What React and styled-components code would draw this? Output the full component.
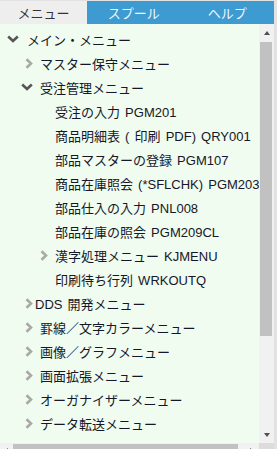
import React from 'react';
import styled, { createGlobalStyle } from 'styled-components';

const Global = createGlobalStyle`
  html, body { margin: 0; padding: 0; overflow: hidden; background: #e2e2e2; }
  body { font-family: "Liberation Sans", "Noto Sans CJK JP", sans-serif; }
`;

const Frame = styled.div`
  width: 274px;
  margin-top: 1px;
  display: flex;
  flex-direction: column;
`;

const TabBar = styled.div`
  display: grid;
  grid-template-columns: 87px 1fr 1fr;
  height: 23px;
  background: #3d9bd1;
`;

const Tab = styled.div`
  display: flex;
  align-items: center;
  justify-content: center;
  font-size: 13px;
  font-family: "Noto Sans CJK JP", sans-serif;
  background: ${(p) => (p.$active ? '#eeeeee' : 'transparent')};
  color: ${(p) => (p.$active ? '#333333' : '#eef6fb')};
`;

const Viewport = styled.div`
  display: grid;
  grid-template-columns: 1fr 15px;
  grid-template-rows: 419px 15px;
  background: #effcef;
`;

const Content = styled.div`
  overflow: hidden;
`;

const Tree = styled.div`
  width: max-content;
  padding: 3px 4px 0 0;
`;

const Row = styled.div`
  display: flex;
  align-items: center;
  height: 24px;
  padding-left: ${(p) => p.$indent}px;
  white-space: nowrap;
  font-size: 13px;
  word-spacing: 1.5px;
  color: #16162a;
`;

const IconBox = styled.span`
  flex: none;
  width: 22px;
  height: 24px;
  display: flex;
  align-items: center;
  justify-content: center;
`;

const Label = styled.span`
  margin-left: ${(p) => (p.$tight ? -5 : 0)}px;
`;

const DownSvg = styled.svg`
  transform: translateX(${(p) => p.$shift}px);
`;

/* scrollbars */
const VBar = styled.div`
  display: flex;
  flex-direction: column;
  background: #f1f1f1;
`;

const HBar = styled.div`
  display: flex;
  background: #f1f1f1;
`;

const Corner = styled.div`
  background: #dcdcdc;
`;

const ArrowButton = styled.div`
  flex: none;
  width: ${(p) => (p.$horizontal ? (p.$narrow ? 12 : 15) : 15)}px;
  height: ${(p) => (p.$horizontal ? 15 : 17)}px;
  display: flex;
  align-items: center;
  justify-content: center;
`;

const triangle = {
  up: 'border-left: 3.5px solid transparent; border-right: 3.5px solid transparent; border-bottom: 4px solid #505050;',
  down: 'border-left: 3.5px solid transparent; border-right: 3.5px solid transparent; border-top: 4px solid #505050;',
  left: 'border-top: 3.5px solid transparent; border-bottom: 3.5px solid transparent; border-right: 4px solid #505050;',
  right: 'border-top: 3.5px solid transparent; border-bottom: 3.5px solid transparent; border-left: 4px solid #505050;',
};

const Triangle = styled.span`
  width: 0;
  height: 0;
  ${(p) => triangle[p.$dir]}
`;

const VTrack = styled.div`
  flex: 1;
  display: flex;
  flex-direction: column;
  padding: 1px 2px 0 1px;
`;

const HTrack = styled.div`
  flex: 1;
  display: flex;
  padding: 1px 0 2px 1px;
`;

const Thumb = styled.div`
  flex: none;
  background: #c1c1c1;
`;

const ChevronRight = () => (
  <svg width="8" height="11" viewBox="0 0 8 11">
    <polyline points="1.5,1.2 6,5.5 1.5,9.8" fill="none" stroke="#a9a9a9" strokeWidth="2.6" />
  </svg>
);

const ChevronDown = ({ shift }) => (
  <DownSvg $shift={shift} width="12" height="8" viewBox="0 0 12 8">
    <polyline points="1.2,1.5 6,6 10.8,1.5" fill="none" stroke="#555555" strokeWidth="2.6" />
  </DownSvg>
);

const INDENTS = [5, 18, 33];

const tree = [
  {
    label: 'メイン・メニュー',
    open: true,
    children: [
      { label: 'マスター保守メニュー', folder: true },
      {
        label: '受注管理メニュー',
        open: true,
        children: [
          { label: '受注の入力 PGM201' },
          { label: '商品明細表 ( 印刷 PDF) QRY001' },
          { label: '部品マスターの登録 PGM107' },
          { label: '商品在庫照会 (*SFLCHK) PGM203' },
          { label: '部品仕入の入力 PNL008' },
          { label: '部品在庫の照会 PGM209CL' },
          { label: '漢字処理メニュー KJMENU', folder: true },
          { label: '印刷待ち行列 WRKOUTQ' },
        ],
      },
      { label: 'DDS 開発メニュー', folder: true, tight: true },
      { label: '罫線／文字カラーメニュー', folder: true },
      { label: '画像／グラフメニュー', folder: true },
      { label: '画面拡張メニュー', folder: true },
      { label: 'オーガナイザーメニュー', folder: true },
      { label: 'データ転送メニュー', folder: true },
    ],
  },
];

const Node = ({ node, depth }) => {
  const hasKids = node.open || node.folder;
  return (
    <>
      <Row $indent={INDENTS[depth]}>
        <IconBox>
          {hasKids && (node.open ? <ChevronDown shift={depth === 0 ? -3 : -2} /> : <ChevronRight />)}
        </IconBox>
        <Label $tight={node.tight}>{node.label}</Label>
      </Row>
      {node.open &&
        node.children.map((c) => <Node key={c.label} node={c} depth={depth + 1} />)}
    </>
  );
};

export default function App() {
  return (
    <>
      <Global />
      <Frame>
        <TabBar>
          <Tab $active>メニュー</Tab>
          <Tab>スプール</Tab>
          <Tab>ヘルプ</Tab>
        </TabBar>
        <Viewport>
          <Content>
            <Tree>
              {tree.map((n) => (
                <Node key={n.label} node={n} depth={0} />
              ))}
            </Tree>
          </Content>
          <VBar>
            <ArrowButton>
              <Triangle $dir="up" />
            </ArrowButton>
            <VTrack>
              <Thumb style={{ height: 294 }} />
            </VTrack>
            <ArrowButton>
              <Triangle $dir="down" />
            </ArrowButton>
          </VBar>
          <HBar>
            <ArrowButton $horizontal $narrow>
              <Triangle $dir="left" />
            </ArrowButton>
            <HTrack>
              <Thumb style={{ width: 225 }} />
            </HTrack>
            <ArrowButton $horizontal>
              <Triangle $dir="right" />
            </ArrowButton>
          </HBar>
          <Corner />
        </Viewport>
      </Frame>
    </>
  );
}
